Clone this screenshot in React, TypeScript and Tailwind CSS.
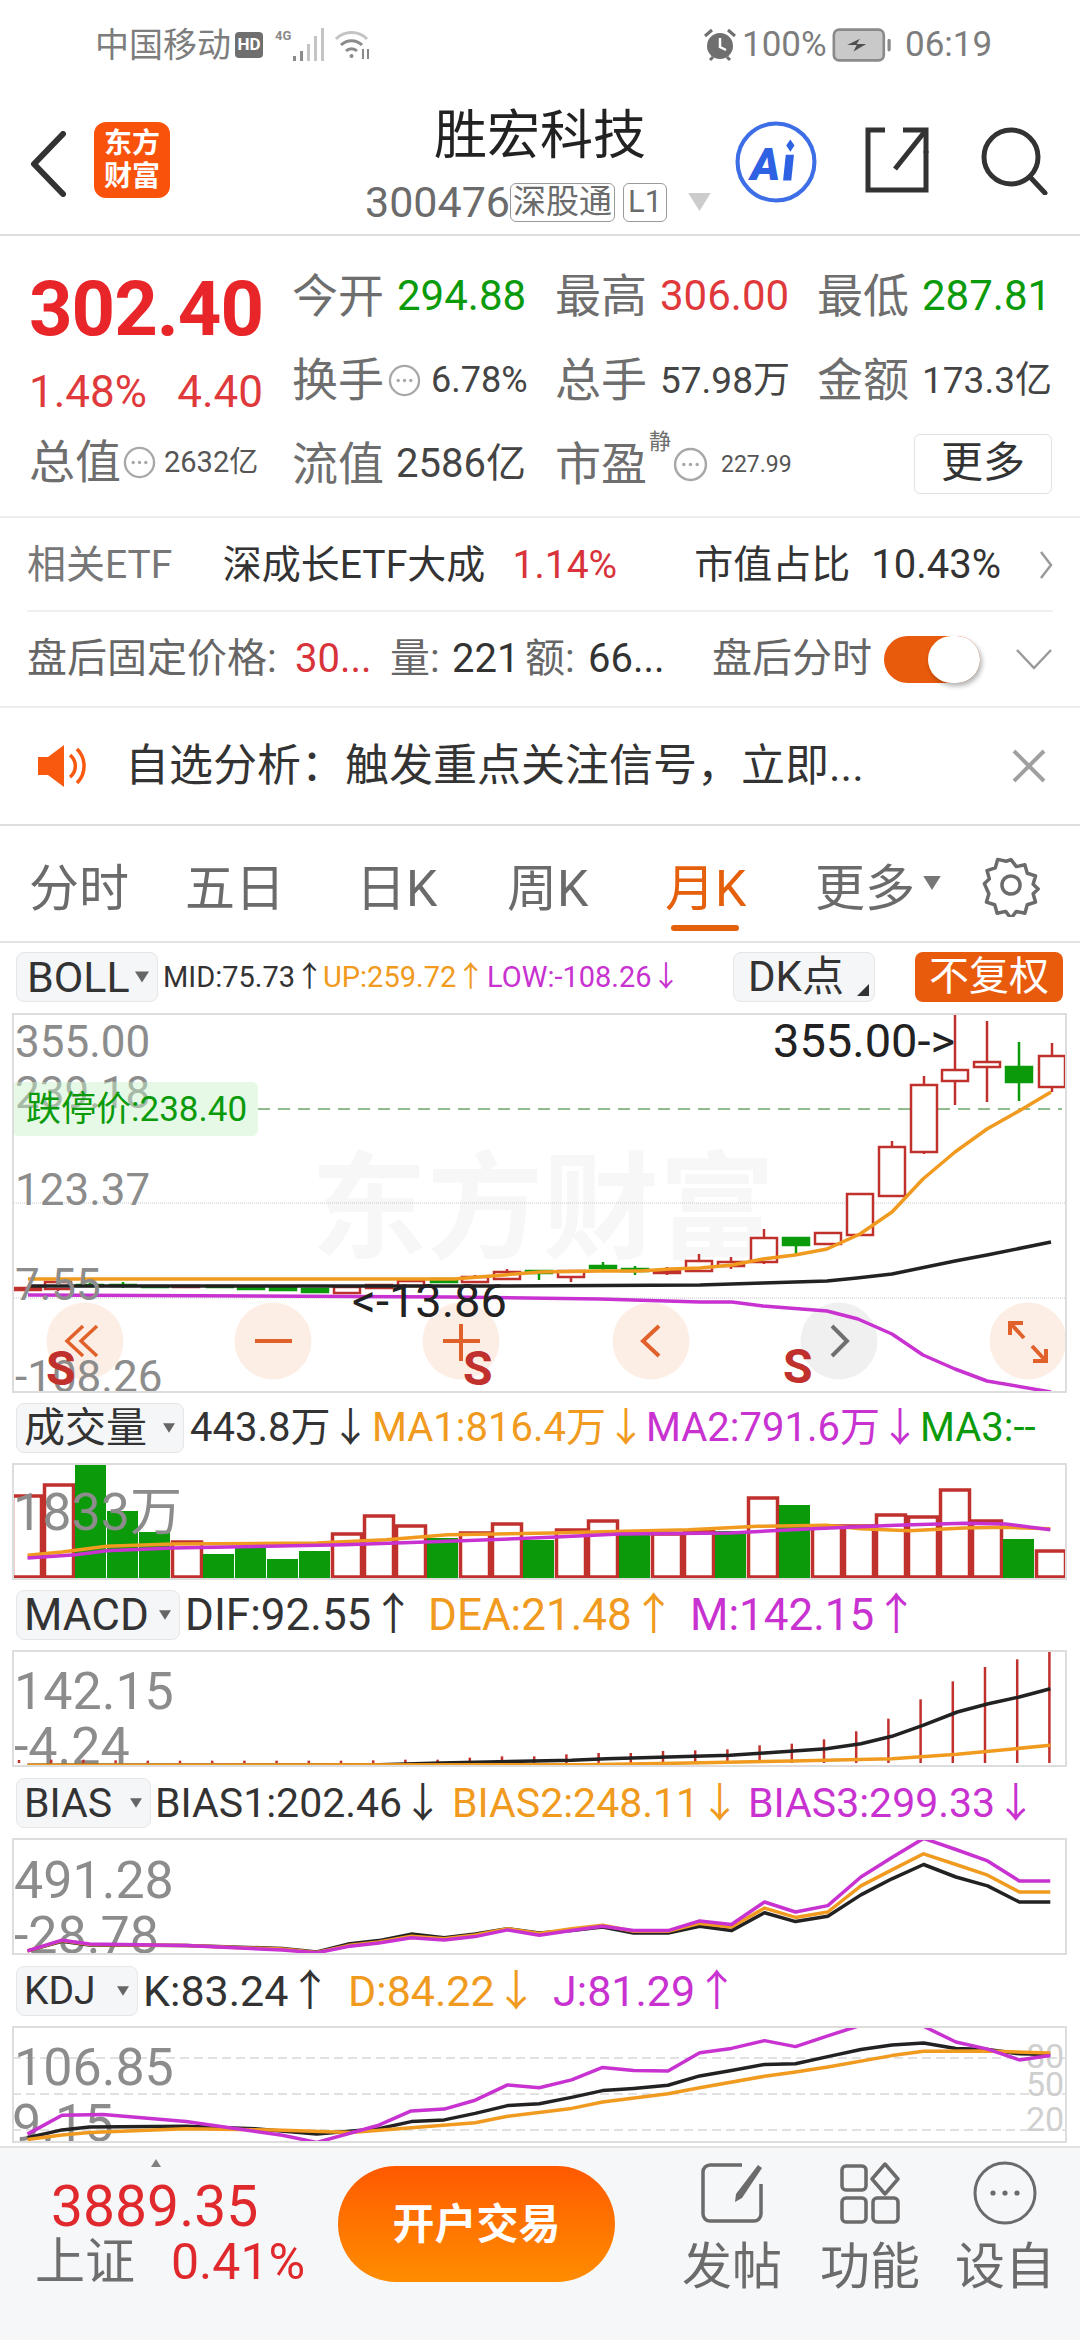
import type { ReactNode } from "react"

const RED = "#c0302d"
const GREEN = "#0a9a0a"
const ORANGE = "#f09a20"
const MAGENTA = "#c832d0"
const AXIS = "#8c8c8c"
const FONT = "Roboto, 'Noto Sans CJK SC', sans-serif"

// zoom crops were stretched, so the traced points go through this to get page px
const toPage = (pts: number[][], y0: number, fy: number) =>
  pts.map(([x, y]) => `${(x / 1.452).toFixed(1)},${(y0 + y / fy).toFixed(1)}`).join(" ")

const Triangle = ({ className, up }: { className: string; up?: boolean }) => (
  <svg viewBox="0 0 10 8" className={className} fill="currentColor">
    <path d={up ? "M5 0l5 8H0z" : "M0 0h10L5 8z"} />
  </svg>
)

const Info = ({ className }: { className: string }) => (
  <svg viewBox="0 0 34 34" className={className} fill="none">
    <circle cx="17" cy="17" r="15" stroke="#a8a8a8" strokeWidth="2.4" />
    <circle cx="10.5" cy="17" r="1.7" fill="#a8a8a8" />
    <circle cx="17" cy="17" r="1.7" fill="#a8a8a8" />
    <circle cx="23.5" cy="17" r="1.7" fill="#a8a8a8" />
  </svg>
)

const StatusBar = () => (
  <div className="h-[85px] pt-[4px] flex items-center text-[34px] text-[#7d7d7d]">
    <span className="ml-[95px] leading-none">中国移动</span>
    <span className="ml-[4px] w-[28px] h-[26px] rounded-[4px] bg-[#6f6f6f] text-white text-[17px] font-bold flex items-center justify-center leading-none">
      HD
    </span>
    <svg viewBox="0 0 50 36" className="ml-[12px] w-[50px] h-[36px]" fill="#8a8a8a">
      <text x="0" y="13" fontSize="13" fontWeight="700" fontFamily={FONT}>4G</text>
      <rect x="18" y="29" width="3" height="5" />
      <rect x="25" y="24" width="3" height="10" />
      <rect x="32" y="17" width="3" height="17" fill="#c4c4c4" />
      <rect x="39" y="9" width="3" height="25" fill="#c4c4c4" />
      <rect x="46" y="1" width="3" height="33" fill="#c4c4c4" />
    </svg>
    <svg viewBox="0 0 38 32" className="ml-[9px] w-[38px] h-[32px]" fill="none" stroke="#8a8a8a" strokeWidth="3">
      <path d="M2 10a22 22 0 0 1 31 0" stroke="#c4c4c4" />
      <path d="M7 16a15 15 0 0 1 21 0" />
      <path d="M12 22a8 8 0 0 1 11 0" />
      <circle cx="17.5" cy="27" r="2" fill="#8a8a8a" stroke="none" />
      <path d="M29 20v10M34 30V20" strokeWidth="2" />
    </svg>
    <svg viewBox="0 0 34 34" className="ml-[331px] w-[34px] h-[34px]" fill="none">
      <circle cx="17" cy="18" r="13" fill="#6f6f6f" />
      <path d="M17 10v9l6 3" stroke="#fff" strokeWidth="2.5" />
      <path d="M2 8l7-6M32 8l-7-6M7 32l3-3M27 32l-3-3" stroke="#6f6f6f" strokeWidth="3" />
    </svg>
    <span className="ml-[5px] w-[85px] leading-none text-[35px]">100%</span>
    <svg viewBox="0 0 56 32" className="ml-[5px] w-[60px] h-[34px]" fill="none">
      <rect x="1.5" y="1.5" width="47" height="29" rx="5" stroke="#8a8a8a" strokeWidth="2.5" fill="#c9c9c9" />
      <path d="M14 16l12-6-3 5h9l-12 7 3-6z" fill="#4f4f4f" />
      <rect x="52" y="10" width="3" height="12" rx="1.5" fill="#8a8a8a" />
    </svg>
    <span className="ml-[13px] leading-none text-[35px]">06:19</span>
  </div>
)

const Header = () => (
  <div className="h-[151px] flex border-b-2 border-[#dedede]">
    <div className="w-[345px] flex items-start">
      <svg viewBox="0 0 36 66" className="ml-[30px] mt-[46px] w-[36px] h-[66px]" fill="none" stroke="#333" strokeWidth="6" strokeLinecap="round" strokeLinejoin="round">
        <path d="M33 3L4 33l29 30" />
      </svg>
      <div className="ml-[28px] mt-[37px] w-[76px] h-[76px] rounded-[12px] bg-[#f9530b] text-white font-bold text-[28px] leading-[33px] flex flex-col items-center justify-center">
        <span>东方</span>
        <span>财富</span>
      </div>
    </div>
    <div className="w-[390px] flex flex-col items-center">
      <span className="mt-[21px] text-[53px] leading-[60px] text-[#222]">胜宏科技</span>
      <div className="mt-[13px] -ml-[3px] flex items-center">
        <span className="text-[43px] leading-[46px] text-[#6b6b6b]">300476</span>
        <span className="h-[39px] px-[2px] rounded-[6px] border border-[#9a9a9a] text-[33px] leading-[36px] text-[#6b6b6b]">深股通</span>
        <span className="ml-[8px] h-[39px] w-[44px] rounded-[6px] border border-[#9a9a9a] text-[31px] leading-[36px] text-center text-[#6b6b6b]">L1</span>
        <Triangle className="ml-[20px] w-[25px] h-[18px] text-[#cccccc]" />
      </div>
    </div>
    <div className="flex items-start">
      <svg viewBox="0 0 80 80" className="mt-[36px] w-[82px] h-[82px]" fill="none">
        <circle cx="40" cy="40" r="37.5" stroke="#3d6ee6" strokeWidth="4" />
        <text x="15" y="58" fontSize="44" fontWeight="900" fontStyle="italic" fill="#2e62e3" fontFamily={FONT}>A</text>
        <rect x="49" y="33" width="8" height="25" fill="#2e62e3" transform="skewX(-6) translate(4 0)" />
        <path d="M54 18l4 6-4 6-4-6z" fill="#2e62e3" />
      </svg>
      <svg viewBox="0 0 64 66" className="ml-[48px] mt-[42px] w-[64px] h-[66px]" fill="none" stroke="#333" strokeWidth="5">
        <path d="M20 3H3v60h58V24" />
        <path d="M38 3h23v23" />
        <path d="M61 3L30 42" />
      </svg>
      <svg viewBox="0 0 68 68" className="ml-[52px] mt-[42px] w-[68px] h-[68px]" fill="none" stroke="#333" strokeWidth="5" strokeLinecap="round">
        <circle cx="30" cy="30" r="27" />
        <path d="M49 50l15 16" />
      </svg>
    </div>
  </div>
)

const Stat = ({ label, children }: { label: string; children: ReactNode }) => (
  <div className="flex items-center h-[84px]">
    <span className="-ml-[1px] text-[46px] text-[#6e6e6e] leading-none">{label}</span>
    {children}
  </div>
)

const Stats = () => (
  <div className="h-[282px] pt-[18px] flex border-b-2 border-[#ededed]">
    <div className="ml-[30px] w-[233px] flex flex-col">
      <div className="-ml-[1px] h-[110px] flex items-center text-[76px] font-bold leading-none text-[#e8262a] tracking-[-1px]">302.40</div>
      <div className="h-[56px] flex items-center justify-between text-[44px] leading-none text-[#e0393c] whitespace-nowrap">
        <span className="-ml-[1px]">1.48%</span>
        <span>4.40</span>
      </div>
      <Stat label="总值">
        <Info className="ml-[2px] w-[33px] h-[33px]" />
        <span className="ml-[8px] text-[29px] text-[#555] leading-none whitespace-nowrap">2632亿</span>
      </Stat>
    </div>
    <div className="ml-[30px] w-[760px] grid grid-cols-[263px_262px_235px] content-start">
      <Stat label="今开"><span className="ml-[13px] text-[42px] leading-none text-[#0a9a0a]">294.88</span></Stat>
      <Stat label="最高"><span className="ml-[13px] text-[42px] leading-none text-[#e0393c]">306.00</span></Stat>
      <Stat label="最低"><span className="ml-[13px] text-[42px] leading-none text-[#0a9a0a]">287.81</span></Stat>
      <Stat label="换手">
        <Info className="ml-[4px] w-[33px] h-[33px]" />
        <span className="ml-[10px] text-[36px] leading-none text-[#444]">6.78%</span>
      </Stat>
      <Stat label="总手"><span className="ml-[13px] text-[37px] leading-none text-[#444]">57.98万</span></Stat>
      <Stat label="金额"><span className="ml-[13px] text-[37px] leading-none text-[#444] whitespace-nowrap">173.3亿</span></Stat>
      <Stat label="流值"><span className="ml-[12px] text-[40px] leading-none text-[#444]">2586亿</span></Stat>
      <Stat label="市盈">
        <span className="relative -top-[22px] ml-[2px] text-[22px] leading-none text-[#6e6e6e]">静</span>
        <Info className="ml-[2px] w-[35px] h-[35px]" />
        <span className="ml-[13px] text-[23px] leading-none text-[#555]">227.99</span>
      </Stat>
      <div className="flex items-center justify-end">
        <span className="mr-[1px] w-[138px] h-[60px] border border-[#e2e2e2] rounded-[6px] text-[42px] leading-[56px] text-center text-[#333]">更多</span>
      </div>
    </div>
  </div>
)

const EtfRow = () => (
  <div className="mx-[27px] h-[94px] pt-[2px] flex items-center border-b-2 border-[#f0f0f0] text-[39px] leading-none whitespace-nowrap">
    <span className="w-[196px] text-[#777]">相关ETF</span>
    <span className="w-[290px] text-[#333]">深成长ETF大成</span>
    <span className="w-[182px] text-[#d8333a]">1.14%</span>
    <span className="w-[177px] text-[#333]">市值占比</span>
    <span className="w-[168px] text-[#333] text-[40px]">10.43%</span>
    <svg viewBox="0 0 14 30" className="w-[14px] h-[30px]" fill="none" stroke="#9a9a9a" strokeWidth="2.5">
      <path d="M2 2l10 13L2 28" />
    </svg>
  </div>
)

const AfterHoursRow = () => (
  <div className="h-[96px] flex items-center border-b-2 border-[#ededed] text-[40px] leading-none whitespace-nowrap">
    <span className="ml-[27px] w-[268px] text-[#666]">盘后固定价格:</span>
    <span className="w-[95px] text-[#d8333a]">30...</span>
    <span className="w-[62px] text-[#666]">量:</span>
    <span className="w-[73px] text-[#333]">221</span>
    <span className="w-[63px] text-[#666]">额:</span>
    <span className="w-[124px] text-[#333]">66...</span>
    <span className="w-[172px] text-[#666]">盘后分时</span>
    <span className="relative w-[96px] h-[47px] rounded-full bg-[#e85a0c]">
      <span className="absolute right-0 top-0 w-[52px] h-[47px] rounded-full bg-white shadow-[2px_3px_5px_rgba(0,0,0,0.3)]" />
    </span>
    <svg viewBox="0 0 38 22" className="ml-[35px] w-[38px] h-[22px]" fill="none" stroke="#9a9a9a" strokeWidth="2.5">
      <path d="M2 2l17 18L36 2" />
    </svg>
  </div>
)

const NoticeRow = () => (
  <div className="h-[118px] flex items-center border-b-2 border-[#dedede]">
    <svg viewBox="0 0 50 42" className="ml-[38px] w-[50px] h-[42px]" fill="#f9590f">
      <path d="M0 12h10L26 0v42L10 30H0z" />
      <path d="M32 10a14 14 0 0 1 0 22" fill="none" stroke="#f9590f" strokeWidth="3.5" />
      <path d="M39 4a24 24 0 0 1 0 34" fill="none" stroke="#f9590f" strokeWidth="3.5" />
    </svg>
    <span className="ml-[37px] w-[887px] text-[44px] leading-none text-[#333] whitespace-nowrap">自选分析：触发重点关注信号，立即...</span>
    <svg viewBox="0 0 34 34" className="w-[34px] h-[34px]" fill="none" stroke="#a0a0a0" strokeWidth="4">
      <path d="M2 2l30 30M32 2L2 32" />
    </svg>
  </div>
)

const Tabs = () => (
  <div className="h-[117px] flex border-b-2 border-[#e2e2e2] text-[50px] leading-none text-[#6b6b6b] whitespace-nowrap">
    <span className="ml-[29px] mt-[38px] w-[156px]">分时</span>
    <span className="mt-[38px] w-[171px]">五日</span>
    <span className="mt-[38px] w-[151px]">日K</span>
    <span className="mt-[38px] w-[158px]">周K</span>
    <div className="w-[150px] flex flex-col items-start text-[#e4600d]">
      <span className="mt-[38px]">月K</span>
      <span className="mt-[11px] ml-[6px] w-[68px] h-[6px] rounded-full bg-[#e4600d]" />
    </div>
    <span className="mt-[38px]">更多</span>
    <Triangle className="mt-[50px] ml-[8px] w-[18px] h-[14px] text-[#777]" />
    <svg viewBox="0 0 24 24" className="ml-[38px] mt-[27px] w-[64px] h-[64px]" fill="none" stroke="#6b6b6b" strokeWidth="1.3" strokeLinejoin="round">
      <path d="M12 2.500l2 2.600 3.200-.7.900 3.200 3.100 1-.9 3.100 1.900 1.800-1.900 1.800.9 3.100-3.100 1-.9 3.200-3.200-.7-2 2.600-2-2.600-3.200.7-.9-3.200-3.100-1 .9-3.100L2 11.500l1.900-1.800-.9-3.100 3.100-1 .9-3.200 3.200.7z" />
      <circle cx="12" cy="12" r="3.4" />
    </svg>
  </div>
)

type Val = { text: string; color: string; w?: string }

const IndicatorHead = ({
  name,
  nameSize,
  btn,
  vals,
  gap,
  textSize,
}: {
  name: string
  nameSize: string
  btn: string
  vals: Val[]
  gap: string
  textSize: string
}) => (
  <div className={`ml-[16px] h-[50px] flex items-center whitespace-nowrap ${gap}`}>
    <div className={`h-[50px] rounded-[8px] border border-[#e6e6e6] bg-[#f5f6f8] flex items-center justify-between pl-[7px] pr-[8px] text-[#333] ${btn}`}>
      <span className={`leading-none ${nameSize}`}>{name}</span>
      <Triangle className="w-[12px] h-[10px] text-[#666]" />
    </div>
    {vals.map((v) => (
      <span key={v.text} className={`leading-none ${textSize} ${v.w ?? ""}`} style={{ color: v.color }}>
        {v.text}
      </span>
    ))}
  </div>
)

const BollHead = () => (
  <div className="ml-[16px] mr-[17px] h-[50px] flex items-center whitespace-nowrap">
    <div className="w-[142px] h-[50px] rounded-[8px] border border-[#e6e6e6] bg-[#f5f6f8] flex items-center justify-between pl-[10px] pr-[8px] text-[#333]">
      <span className="text-[43px] leading-none">BOLL</span>
      <Triangle className="w-[14px] h-[12px] text-[#666]" />
    </div>
    <span className="ml-[5px] w-[160px] text-[29px] leading-none text-[#333]">MID:75.73↑</span>
    <span className="w-[164px] text-[29px] leading-none text-[#f09a20]">UP:259.72↑</span>
    <span className="w-[246px] text-[29px] leading-none text-[#c832d0]">LOW:-108.26↓</span>
    <div className="relative w-[142px] h-[50px] rounded-[8px] border border-[#e6e6e6] bg-[#f5f6f8] pl-[14px] text-[42px] leading-[48px] text-[#333]">
      DK点
      <span className="absolute right-[5px] bottom-[5px] w-0 h-0 border-l-[12px] border-l-transparent border-b-[12px] border-b-[#333]" />
    </div>
    <div className="ml-[40px] w-[148px] h-[50px] rounded-[8px] bg-[#e85a0c] text-white text-[40px] leading-[50px] text-center">不复权</div>
  </div>
)

const Line = ({ points, color, width = 3.5 }: { points: string; color: string; width?: number }) => (
  <polyline points={points} fill="none" stroke={color} strokeWidth={width} strokeLinejoin="round" />
)

const AxisText = ({ x, y, size = 52, color = AXIS, children }: { x: number; y: number; size?: number; color?: string; children: ReactNode }) => (
  <text x={x} y={y} fontSize={size} fill={color} fontFamily={FONT} dominantBaseline="central">
    {children}
  </text>
)

// x centre, body top, body bottom, wick top, wick bottom, rising?
const CANDLES: [number, number, number, number, number, boolean][] = [
  [28, 1289, 1291, 1289, 1291, true],
  [58, 1283, 1290, 1281, 1292, true],
  [90, 1286, 1287, 1284, 1288, false],
  [123, 1286, 1287, 1283, 1289, false],
  [155, 1287, 1288, 1286, 1289, false],
  [186, 1287, 1288, 1286, 1289, true],
  [220, 1287, 1288, 1287, 1288, false],
  [251, 1288, 1290, 1288, 1290, false],
  [283, 1288, 1291, 1288, 1291, false],
  [315, 1290, 1293, 1290, 1293, false],
  [347, 1288, 1294, 1288, 1294, true],
  [379, 1286, 1289, 1285, 1290, true],
  [411, 1282, 1287, 1281, 1288, true],
  [444, 1280, 1283, 1280, 1283, false],
  [475, 1278, 1283, 1276, 1284, true],
  [507, 1273, 1280, 1270, 1281, true],
  [539, 1272, 1274, 1272, 1281, false],
  [571, 1272, 1278, 1272, 1283, true],
  [603, 1267, 1269, 1263, 1273, false],
  [635, 1270, 1272, 1267, 1276, false],
  [667, 1272, 1274, 1268, 1276, true],
  [699, 1262, 1272, 1255, 1273, true],
  [731, 1263, 1267, 1258, 1270, true],
  [764, 1239, 1263, 1230, 1265, true],
  [796, 1239, 1246, 1238, 1257, false],
  [828, 1234, 1245, 1234, 1246, true],
  [860, 1195, 1236, 1195, 1237, true],
  [892, 1148, 1197, 1142, 1198, true],
  [924, 1086, 1153, 1077, 1155, true],
  [955, 1071, 1082, 1014, 1106, true],
  [987, 1063, 1068, 1022, 1103, true],
  [1019, 1068, 1083, 1043, 1102, false],
  [1052, 1057, 1088, 1044, 1093, true],
]

const BollChart = () => {
  const orange =
    "28,1280 454,1280 540,1273 600,1272 640,1272 670,1270 700,1269 732,1266 763,1260 795,1256 827,1250 860,1235 892,1213 923,1180 955,1153 987,1130 1019,1112 1051,1093"
  const black =
    "28,1287 500,1287 700,1286 763,1284 827,1282 857,1279 892,1275 955,1262 987,1256 1051,1243"
  const magenta =
    "28,1296 450,1298 600,1300 700,1303 732,1303 763,1307 827,1312 858,1320 892,1335 923,1356 955,1370 987,1382 1051,1393"
  const btnX = [85, 273, 461, 651, 1028]
  return (
    <svg viewBox="12 1014 1055 380" className="ml-[12px] w-[1055px] h-[380px] block outline-2 -outline-offset-2 outline-[#dddddd]">
      <text x="311" y="1250" fontSize="116" fontWeight="700" fill="#f7f7f7" fontFamily={FONT}>东方财富</text>
      <path d="M12 1204H1067M12 1299H1067" stroke="#c8c8c8" strokeWidth="1" strokeDasharray="1 1" />
      <path d="M258 1110H1062" stroke="#6aa86a" strokeWidth="1.5" strokeDasharray="12 8" />
      {btnX.map((x) => (
        <circle key={x} cx={x} cy={1342} r={38.5} fill="#fdeee5" />
      ))}
      <circle cx={839} cy={1342} r={38.5} fill="#f0f0f0" />
      <g fill="none" stroke="#e0622a" strokeWidth="4">
        <path d="M83 1327l-16 15 16 15M97 1327l-16 15 16 15" strokeWidth="3.5" />
        <path d="M255 1342h37" />
        <path d="M443 1342h37M461 1325v37" />
        <path d="M659 1327l-16 15 16 15" />
        <path d="M1011 1325l13 14M1010 1336v-12h13M1045 1361l-13-14M1046 1350v12h-13" />
      </g>
      <path d="M832 1327l15 15-15 15" fill="none" stroke="#6f6f6f" strokeWidth="4" />

      {CANDLES.map(([x, top, bot, wt, wb, up]) => {
        const color = up ? RED : GREEN
        return (
          <g key={x}>
            <path d={`M${x} ${wt}V${wb}`} stroke={color} strokeWidth="2.5" />
            <rect
              x={x - 13}
              y={top}
              width={26}
              height={bot - top}
              fill={up ? "#fff" : color}
              stroke={color}
              strokeWidth="2.5"
            />
          </g>
        )
      })}
      <Line points={black} color="#222" />
      <Line points={orange} color={ORANGE} />
      <Line points={magenta} color={MAGENTA} />

      <AxisText x={15} y={1043} size={44}>355.00</AxisText>
      <AxisText x={15} y={1094} size={44}>239.18</AxisText>
      <AxisText x={15} y={1191} size={44}>123.37</AxisText>
      <AxisText x={15} y={1286} size={44}>7.55</AxisText>
      <AxisText x={15} y={1378} size={44}>-108.26</AxisText>
      <rect x={12} y={1083} width={246} height={54} rx={6} fill="#c8f0c8" fillOpacity="0.45" />
      <AxisText x={26} y={1110} size={35} color={GREEN}>跌停价:238.40</AxisText>
      <AxisText x={773} y={1041} size={47} color="#222">355.00-&gt;</AxisText>
      <AxisText x={352} y={1301} size={47} color="#222">&lt;-13.86</AxisText>
      <AxisText x={46} y={1369} size={48} color={RED}><tspan fontWeight="700">S</tspan></AxisText>
      <AxisText x={463} y={1369} size={48} color={RED}><tspan fontWeight="700">S</tspan></AxisText>
      <AxisText x={783} y={1367} size={48} color={RED}><tspan fontWeight="700">S</tspan></AxisText>
    </svg>
  )
}

const VOLUME: [number, boolean][] = [
  [1498, true], [1487, true], [1466, false], [1513, false], [1534, false], [1544, true], [1556, false],
  [1550, false], [1561, false], [1553, false], [1536, true], [1518, true], [1528, true], [1540, false],
  [1535, true], [1526, true], [1542, false], [1532, true], [1523, true], [1537, false], [1536, true],
  [1533, true], [1533, false], [1500, true], [1507, false], [1528, true], [1528, true], [1517, true],
  [1519, true], [1492, true], [1523, true], [1541, false], [1553, true],
]

const VolumeChart = () => (
  <svg viewBox="12 1465 1055 117" className="ml-[12px] w-[1055px] h-[117px] block outline-2 -outline-offset-2 outline-[#dddddd]">
    {VOLUME.map(([top, up], i) => {
      const x = 27 + 32 * i
      return up ? (
        <rect key={i} x={x - 14.5} y={top} width={29} height={1579 - top} fill="#fff" stroke={RED} strokeWidth="3.5" />
      ) : (
        <rect key={i} x={x - 16} y={top} width={31} height={1581 - top} fill={GREEN} />
      )
    })}
    <AxisText x={13} y={1514}>1833万</AxisText>
    <Line
      color={ORANGE}
      points={toPage(
        [[40, 472], [90, 462], [155, 445], [250, 438], [460, 435], [560, 425], [650, 410], [800, 405], [1000, 395], [1100, 385], [1200, 382], [1250, 392], [1320, 398], [1400, 390], [1460, 388], [1525, 392]],
        1400,
        3
      )}
    />
    <Line
      color={MAGENTA}
      points={toPage(
        [[40, 480], [110, 470], [155, 458], [250, 450], [500, 440], [650, 430], [800, 418], [900, 408], [1060, 405], [1180, 392], [1300, 382], [1400, 376], [1460, 378], [1525, 395]],
        1400,
        3
      )}
    />
  </svg>
)

const MACD_TOPS = [
  1089, 1088, 1088, 1090, 1091, 1091, 1091, 1091, 1091, 1091, 1091,
  1090, 1088, 1088, 1082, 1078, 1078, 1072, 1068, 1068, 1062, 1060, 1057, 1045, 1040, 1027, 1003, 965, 907, 853, 810, 787, 760,
]

const MacdChart = () => (
  <svg viewBox="12 1653 1055 117" className="ml-[12px] w-[1055px] h-[117px] block outline-2 -outline-offset-2 outline-[#dddddd]">
    <AxisText x={14} y={1694}>142.15</AxisText>
    <AxisText x={14} y={1749}>-4.24</AxisText>
    {MACD_TOPS.map((top, i) => (
      <path key={i} d={`M${19 + i * 32.2} ${1400 + top / 3}V1766`} stroke={RED} strokeWidth="2.5" />
    ))}
    <Line
      color="#222"
      points={toPage(
        [[40, 1105], [550, 1103], [640, 1098], [830, 1090], [880, 1085], [1060, 1075], [1110, 1068], [1200, 1055], [1250, 1040], [1295, 1018], [1340, 985], [1390, 945], [1435, 920], [1480, 900], [1525, 875]],
        1400,
        3
      )}
    />
    <Line
      color={ORANGE}
      points={toPage(
        [[40, 1105], [850, 1103], [1000, 1098], [1150, 1092], [1295, 1085], [1390, 1072], [1525, 1045]],
        1400,
        3
      )}
    />
  </svg>
)

const BiasChart = () => (
  <svg viewBox="12 1841 1055 117" className="ml-[12px] w-[1055px] h-[117px] block outline-2 -outline-offset-2 outline-[#dddddd]">
    <AxisText x={14} y={1883}>491.28</AxisText>
    <AxisText x={14} y={1938}>-28.78</AxisText>
    <Line
      color="#222"
      points={toPage(
        [[40, 487], [90, 460], [130, 470], [270, 472], [410, 480], [460, 490], [505, 468], [550, 458], [597, 440], [645, 450], [690, 440], [737, 425], [783, 437], [830, 430], [875, 420], [920, 437], [970, 437], [1016, 418], [1062, 430], [1110, 380], [1155, 405], [1202, 390], [1250, 330], [1295, 285], [1341, 245], [1388, 280], [1434, 305], [1480, 350], [1525, 350]],
        1780,
        2.8
      )}
    />
    <Line
      color={ORANGE}
      points={toPage(
        [[40, 487], [90, 458], [130, 469], [270, 472], [410, 482], [460, 491], [505, 472], [550, 462], [597, 446], [645, 453], [690, 442], [737, 425], [783, 438], [830, 425], [875, 415], [920, 432], [970, 432], [1016, 410], [1062, 420], [1110, 367], [1155, 393], [1202, 378], [1250, 305], [1295, 260], [1341, 215], [1388, 245], [1434, 275], [1480, 322], [1525, 322]],
        1780,
        2.8
      )}
    />
    <Line
      color={MAGENTA}
      points={toPage(
        [[40, 487], [90, 457], [130, 468], [270, 472], [410, 484], [460, 492], [505, 475], [550, 465], [597, 450], [645, 456], [690, 447], [737, 428], [783, 443], [830, 430], [875, 418], [920, 430], [970, 430], [1016, 403], [1062, 413], [1110, 350], [1155, 378], [1202, 360], [1250, 280], [1295, 225], [1341, 172], [1388, 203], [1434, 235], [1480, 291], [1525, 291]],
        1780,
        2.8
      )}
    />
  </svg>
)

const KdjChart = () => (
  <svg viewBox="12 2029 1055 117" className="ml-[12px] w-[1055px] h-[117px] block outline-2 -outline-offset-2 outline-[#dddddd]">
    <path d="M12 2061H1067M12 2097H1067M12 2133H1067" stroke="#d8d8d8" strokeWidth="1.5" strokeDasharray="9 5" />
    <AxisText x={14} y={2070}>106.85</AxisText>
    <AxisText x={12} y={2126}>9.15</AxisText>
    <AxisText x={1026} y={2059} size={34} color="#cfcfcf">80</AxisText>
    <AxisText x={1026} y={2087} size={34} color="#cfcfcf">50</AxisText>
    <AxisText x={1026} y={2122} size={34} color="#cfcfcf">20</AxisText>
    <Line
      color="#222"
      points={toPage(
        [[40, 1010], [90, 988], [130, 980], [270, 978], [370, 985], [460, 1000], [550, 985], [597, 965], [645, 960], [690, 942], [737, 920], [783, 915], [830, 897], [875, 878], [920, 872], [970, 863], [1016, 837], [1062, 822], [1110, 805], [1155, 803], [1202, 783], [1250, 763], [1295, 750], [1341, 745], [1388, 760], [1434, 763], [1480, 775], [1525, 777]],
        1780,
        2.8
      )}
    />
    <Line
      color={ORANGE}
      points={toPage(
        [[40, 1015], [90, 1002], [130, 995], [270, 985], [400, 988], [510, 995], [597, 982], [690, 968], [737, 950], [830, 928], [875, 910], [970, 887], [1016, 870], [1110, 838], [1155, 826], [1202, 812], [1295, 780], [1341, 768], [1434, 767], [1525, 773]],
        1780,
        2.8
      )}
    />
    <Line
      color={MAGENTA}
      points={toPage(
        [[40, 1000], [90, 947], [150, 945], [270, 965], [410, 1003], [460, 1023], [550, 975], [597, 935], [645, 930], [690, 905], [737, 862], [783, 870], [830, 848], [875, 813], [920, 822], [970, 823], [1016, 772], [1062, 760], [1110, 738], [1155, 755], [1202, 725], [1245, 698], [1341, 698], [1388, 742], [1434, 762], [1480, 792], [1525, 780]],
        1780,
        2.8
      )}
    />
  </svg>
)

const Footer = () => (
  <div className="h-[194px] bg-[#f6f7f9] border-t-2 border-[#e2e2e2] flex">
    <div className="ml-[35px] w-[303px] flex flex-col">
      <Triangle up className="ml-[110px] mt-[11px] w-[22px] h-[8px] text-[#808080]" />
      <span className="ml-[16px] mt-[11px] text-[57px] leading-none text-[#e0292c]">3889.35</span>
      <div className="mt-[2px] flex items-center">
        <span className="text-[50px] leading-none text-[#6e6e6e]">上证</span>
        <span className="ml-[36px] text-[50px] leading-none text-[#e0292c]">0.41%</span>
      </div>
    </div>
    <div className="mt-[18px] w-[277px] h-[116px] rounded-[58px] bg-linear-to-b from-[#ff5800] to-[#ff8c00] text-white font-bold text-[42px] flex items-center justify-center">
      开户交易
    </div>
    <div className="ml-[67px] w-[100px] flex flex-col items-center">
      <svg viewBox="0 0 64 62" className="mt-[14px] w-[64px] h-[62px]" fill="none" stroke="#6b6b6b" strokeWidth="3.5" strokeLinejoin="round">
        <path d="M42 3H10a7 7 0 0 0-7 7v42a7 7 0 0 0 7 7h44a7 7 0 0 0 7-7V22" />
        <path d="M58 3l4 3-20 30-7 4 1-8z" fill="#6b6b6b" stroke="none" />
      </svg>
      <span className="mt-[18px] text-[50px] leading-none text-[#6b6b6b] whitespace-nowrap">发帖</span>
    </div>
    <div className="ml-[38px] w-[100px] flex flex-col items-center">
      <svg viewBox="0 0 60 62" className="mt-[14px] w-[60px] h-[62px]" fill="none" stroke="#6b6b6b" strokeWidth="3.5" strokeLinejoin="round">
        <rect x="2" y="4" width="24" height="24" rx="4" />
        <path d="M45 2l13 15-13 15-13-15z" />
        <rect x="2" y="36" width="24" height="24" rx="4" />
        <rect x="33" y="36" width="25" height="24" rx="4" />
      </svg>
      <span className="mt-[18px] text-[50px] leading-none text-[#6b6b6b] whitespace-nowrap">功能</span>
    </div>
    <div className="ml-[37px] w-[96px] flex flex-col items-center">
      <svg viewBox="0 0 64 64" className="mt-[13px] w-[64px] h-[64px]" fill="none" stroke="#6b6b6b" strokeWidth="3">
        <circle cx="32" cy="32" r="30" />
        <circle cx="20" cy="32" r="2.6" fill="#6b6b6b" stroke="none" />
        <circle cx="32" cy="32" r="2.6" fill="#6b6b6b" stroke="none" />
        <circle cx="44" cy="32" r="2.6" fill="#6b6b6b" stroke="none" />
      </svg>
      <span className="mt-[17px] text-[50px] leading-none text-[#6b6b6b] whitespace-nowrap">设自</span>
    </div>
  </div>
)

export default function App() {
  return (
    <div className="w-[1080px] h-[2340px] overflow-hidden bg-white flex flex-col font-[Roboto,'Noto_Sans_CJK_SC',sans-serif]">
      <StatusBar />
      <Header />
      <Stats />
      <EtfRow />
      <AfterHoursRow />
      <NoticeRow />
      <Tabs />
      <div className="flex-1 flex flex-col overflow-hidden pt-[9px]">
        <BollHead />
        <div className="mt-[11px]"><BollChart /></div>
        <div className="mt-[10px]">
          <IndicatorHead
            name="成交量"
            nameSize="text-[41px]"
            btn="w-[168px]"
            gap="gap-[6px]"
            textSize="text-[40px]"
            vals={[
              { text: "443.8万↓", color: "#333", w: "w-[176px]" },
              { text: "MA1:816.4万↓", color: ORANGE, w: "w-[268px]" },
              { text: "MA2:791.6万↓", color: MAGENTA, w: "w-[268px]" },
              { text: "MA3:--", color: GREEN },
            ]}
          />
        </div>
        <div className="mt-[10px]"><VolumeChart /></div>
        <div className="mt-[10px]">
          <IndicatorHead
            name="MACD"
            nameSize="text-[44px]"
            btn="w-[164px]"
            gap="gap-[5px]"
            textSize="text-[44px]"
            vals={[
              { text: "DIF:92.55↑", color: "#333", w: "w-[238px]" },
              { text: "DEA:21.48↑", color: ORANGE, w: "w-[257px]" },
              { text: "M:142.15↑", color: MAGENTA },
            ]}
          />
        </div>
        <div className="mt-[10px]"><MacdChart /></div>
        <div className="mt-[11px]">
          <IndicatorHead
            name="BIAS"
            nameSize="text-[41px]"
            btn="w-[135px]"
            gap="gap-[4px]"
            textSize="text-[41px]"
            vals={[
              { text: "BIAS1:202.46↓", color: "#333", w: "w-[293px]" },
              { text: "BIAS2:248.11↓", color: ORANGE, w: "w-[292px]" },
              { text: "BIAS3:299.33↓", color: MAGENTA },
            ]}
          />
        </div>
        <div className="mt-[10px]"><BiasChart /></div>
        <div className="mt-[11px]">
          <IndicatorHead
            name="KDJ"
            nameSize="text-[39px]"
            btn="w-[122px]"
            gap="gap-[5px]"
            textSize="text-[43px]"
            vals={[
              { text: "K:83.24↑", color: "#333", w: "w-[200px]" },
              { text: "D:84.22↓", color: ORANGE, w: "w-[200px]" },
              { text: "J:81.29↑", color: MAGENTA },
            ]}
          />
        </div>
        <div className="mt-[10px]"><KdjChart /></div>
      </div>
      <Footer />
    </div>
  )
}
